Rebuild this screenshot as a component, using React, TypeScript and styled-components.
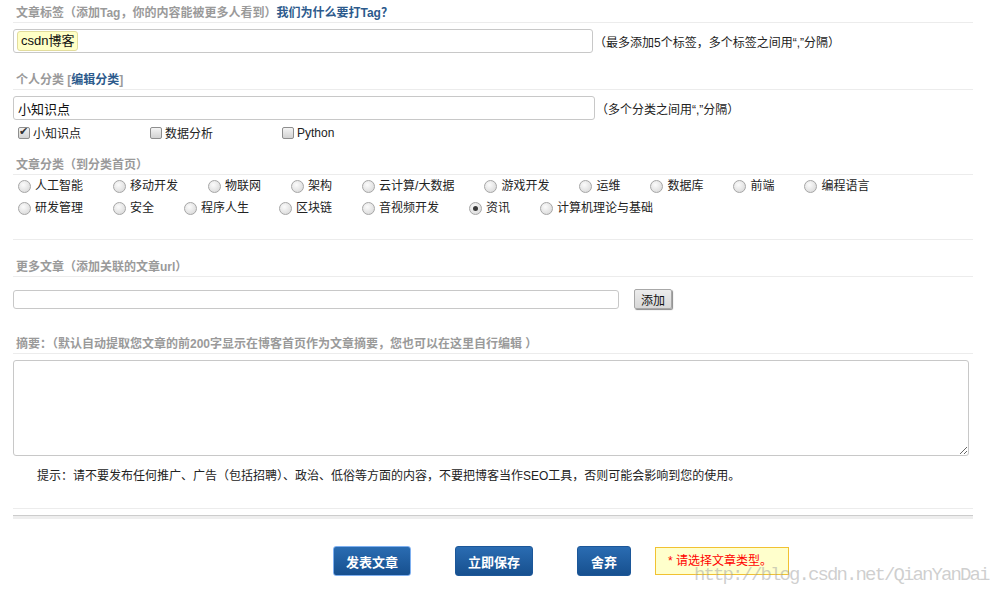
import styled, { createGlobalStyle } from "styled-components";

const GlobalStyle = createGlobalStyle`
    body {
        margin: 0;
        background: #fff;
        font-family: "Liberation Sans", "Noto Sans CJK SC", sans-serif;
        font-size: 12px;
        color: #222;
    }
`;

const Page = styled.div`
    position: relative;
    box-sizing: border-box;
    width: 973px;
    min-height: 595px;
    padding: 4px 0 0 13px;
    display: flex;
    flex-direction: column;
`;

const Heading = styled.div<{ $top: number }>`
    margin-top: ${(p) => p.$top}px;
    height: 18px;
    line-height: 18px;
    padding-left: 3px;
    font-weight: bold;
    color: #9a9a9a;
    border-bottom: 1px solid #ececec;
`;

const HeadLink = styled.span`
    color: #2c5a8c;
`;

const Row = styled.div<{ $top: number }>`
    margin-top: ${(p) => p.$top}px;
    display: flex;
    align-items: center;
`;

const TagBox = styled.div`
    box-sizing: border-box;
    width: 580px;
    height: 24px;
    border: 1px solid #c8c8c8;
    border-radius: 3px;
    display: flex;
    align-items: center;
    padding-left: 3px;
`;

const Chip = styled.span`
    height: 18px;
    line-height: 18px;
    padding: 0 3px;
    background: #ffffc6;
    border: 1px solid #e2dc9c;
    border-radius: 3px;
    font-size: 13px;
    color: #111;
`;

const TextInput = styled.input<{ $w: number; $h: number }>`
    box-sizing: border-box;
    width: ${(p) => p.$w}px;
    height: ${(p) => p.$h}px;
    border: 1px solid #c8c8c8;
    border-radius: 3px;
    padding: 0 4px;
    font-family: inherit;
    font-size: 13px;
    color: #111;
    outline: none;
`;

const Hint = styled.span`
    margin-left: 1px;
    color: #222;
`;

const CheckItem = styled.label`
    width: 132px;
    display: flex;
    align-items: center;
    padding-left: 5px;
    box-sizing: border-box;
`;

const CheckBox = styled.span<{ $checked?: boolean }>`
    box-sizing: border-box;
    width: 12px;
    height: 12px;
    margin-right: 3px;
    border: 1px solid #8e8e8e;
    border-radius: 2px;
    background: linear-gradient(#f4f4f4, #d2d2d2);
    position: relative;
    &::after {
        content: ${(p) => (p.$checked ? '"✔"' : '""')};
        position: absolute;
        left: 0;
        top: -3px;
        font-size: 11px;
        color: #333;
    }
`;

const RadioRows = styled.div`
    display: flex;
    flex-direction: column;
    padding-bottom: 20px;
    border-bottom: 1px solid #ececec;
`;

const RadioRow = styled.div`
    display: flex;
    height: 22px;
    line-height: 22px;
    align-items: center;
    padding-left: 5px;
    overflow: hidden;
`;

const RadioItem = styled.label`
    display: flex;
    align-items: center;
    margin-right: 30px;
`;

const Radio = styled.span<{ $checked?: boolean }>`
    box-sizing: border-box;
    width: 13px;
    height: 13px;
    margin-right: 4px;
    border-radius: 50%;
    border: 1px solid #a6a6a6;
    background: radial-gradient(circle at 40% 35%, #fbfbfb, #d4d4d4);
    display: flex;
    align-items: center;
    justify-content: center;
    &::after {
        content: "";
        width: 5px;
        height: 5px;
        border-radius: 50%;
        background: ${(p) => (p.$checked ? "#3a3a3a" : "transparent")};
    }
`;

const AddButton = styled.button`
    margin-left: 15px;
    height: 20px;
    padding: 0 6px;
    border: 1px solid #a8a8a8;
    border-radius: 2px;
    background: linear-gradient(#ececec, #d8d8d8);
    box-shadow: 1px 1px 1px #8a8a8a;
    font-family: inherit;
    font-size: 12px;
    color: #111;
`;

const Summary = styled.textarea`
    box-sizing: border-box;
    margin-top: 6px;
    width: 956px;
    height: 96px;
    border: 1px solid #c8c8c8;
    border-radius: 3px;
    font-family: inherit;
    outline: none;
`;

const Tip = styled.div`
    margin-top: 11px;
    padding-left: 24px;
    height: 18px;
    line-height: 18px;
    color: #222;
`;

const ThinLine = styled.div`
    margin-top: 23px;
    height: 1px;
    background: #ececec;
`;

const ThickLine = styled.div`
    margin-top: 6px;
    height: 3px;
    border-top: 1px solid #cccccc;
    background: #eeeeee;
`;

const Actions = styled.div`
    margin-top: 27px;
    display: flex;
    align-items: center;
    padding-left: 320px;
    gap: 44px;
`;

const Primary = styled.button<{ $w: number; $focus?: boolean }>`
    box-sizing: border-box;
    width: ${(p) => p.$w}px;
    height: 30px;
    border: ${(p) => (p.$focus ? "1px solid #7fb0f0" : "1px solid #1c5799")};
    border-radius: 3px;
    background: linear-gradient(#2a6cb2, #17508f);
    color: #fff;
    font-family: inherit;
    font-size: 13px;
    font-weight: bold;
`;

const ErrorBox = styled.div`
    box-sizing: border-box;
    width: 134px;
    height: 28px;
    margin-left: -20px;
    line-height: 26px;
    padding-left: 12px;
    background: #ffffcc;
    border: 1px solid #f1c232;
    color: #ff0000;
`;

const Watermark = styled.div`
    position: absolute;
    left: 694px;
    top: 564px;
    line-height: 22px;
    font-family: "Liberation Mono", monospace;
    font-size: 19px;
    letter-spacing: -1.9px;
    color: rgba(160, 160, 160, 0.5);
    pointer-events: none;
`;

const row1 = ["人工智能", "移动开发", "物联网", "架构", "云计算/大数据", "游戏开发", "运维", "数据库", "前端", "编程语言"];
const row2 = ["研发管理", "安全", "程序人生", "区块链", "音视频开发", "资讯", "计算机理论与基础"];

function App() {
    return (
        <Page>
            <GlobalStyle />
            <Heading $top={0}>
                文章标签（添加Tag，你的内容能被更多人看到）<HeadLink>我们为什么要打Tag？</HeadLink>
            </Heading>
            <Row $top={6}>
                <TagBox>
                    <Chip>csdn博客</Chip>
                </TagBox>
                <Hint>（最多添加5个标签，多个标签之间用“,”分隔）</Hint>
            </Row>

            <Heading $top={18}>
                个人分类 [<HeadLink>编辑分类</HeadLink>]
            </Heading>
            <Row $top={6}>
                <TextInput $w={582} $h={24} defaultValue="小知识点" />
                <Hint>（多个分类之间用“,”分隔）</Hint>
            </Row>
            <Row $top={4}>
                <CheckItem><CheckBox $checked />小知识点</CheckItem>
                <CheckItem><CheckBox />数据分析</CheckItem>
                <CheckItem><CheckBox />Python</CheckItem>
            </Row>

            <Heading $top={15}>文章分类（到分类首页）</Heading>
            <RadioRows>
                <RadioRow>
                    {row1.map((item) => (
                        <RadioItem key={item}><Radio />{item}</RadioItem>
                    ))}
                </RadioRow>
                <RadioRow>
                    {row2.map((item) => (
                        <RadioItem key={item}><Radio $checked={item === "资讯"} />{item}</RadioItem>
                    ))}
                </RadioRow>
            </RadioRows>

            <Heading $top={18}>更多文章（添加关联的文章url）</Heading>
            <Row $top={12}>
                <TextInput $w={606} $h={19} />
                <AddButton>添加</AddButton>
            </Row>

            <Heading $top={26}>摘要：（默认自动提取您文章的前200字显示在博客首页作为文章摘要，您也可以在这里自行编辑 ）</Heading>
            <Summary />
            <Tip>提示：请不要发布任何推广、广告（包括招聘）、政治、低俗等方面的内容，不要把博客当作SEO工具，否则可能会影响到您的使用。</Tip>
            <ThinLine />
            <ThickLine />

            <Actions>
                <Primary $w={78} $focus>发表文章</Primary>
                <Primary $w={78}>立即保存</Primary>
                <Primary $w={54}>舍弃</Primary>
                <ErrorBox>* 请选择文章类型。</ErrorBox>
            </Actions>
            <Watermark>http://blog.csdn.net/QianYanDai</Watermark>
        </Page>
    );
}

export default App;
